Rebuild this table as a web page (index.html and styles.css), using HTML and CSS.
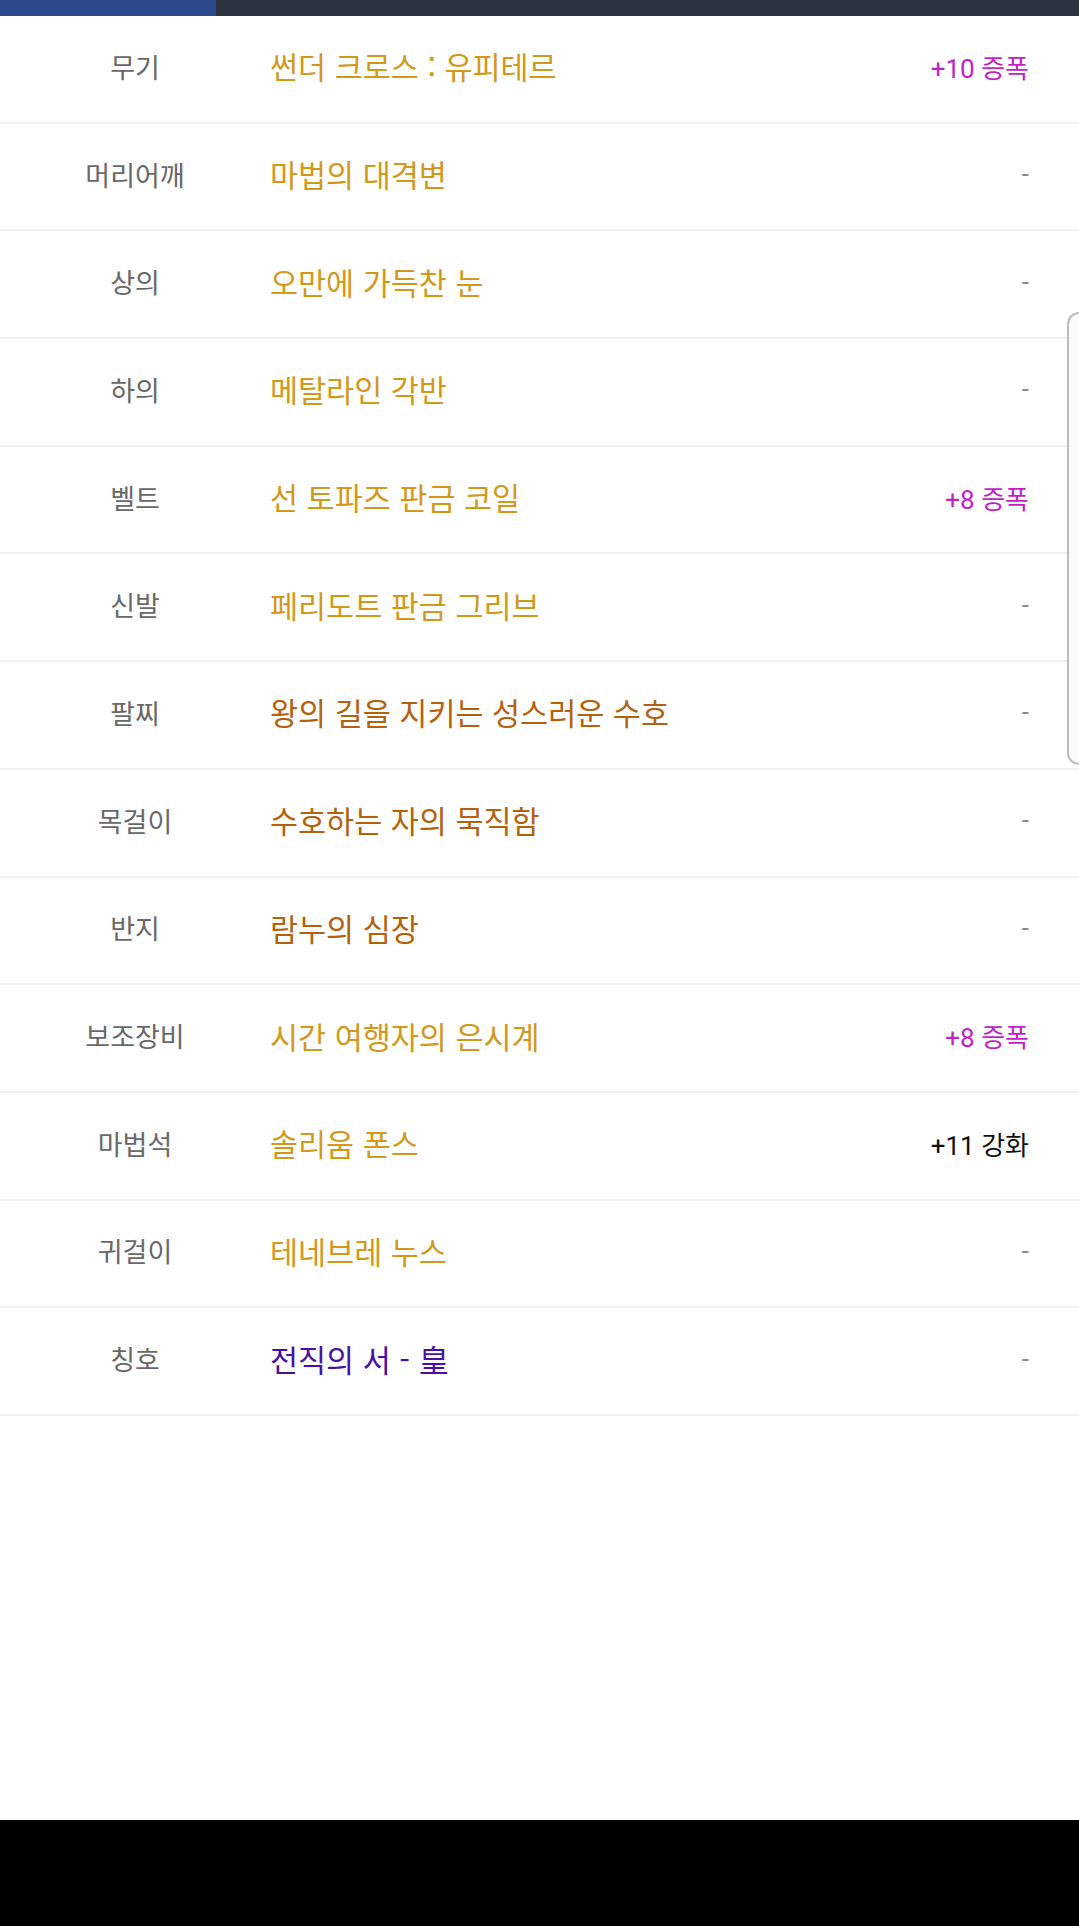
FILE: index.html
```html
<!DOCTYPE html>
<html lang="ko">
<head>
  <meta charset="UTF-8" />
  <meta name="viewport" content="width=device-width, initial-scale=1.0" />
  <title>장비</title>
  <link rel="stylesheet" href="styles.css">
</head>
<body>
  <div class="tabbar">
    <div class="tab-active"></div>
  </div>

  <div class="equip-list">
    <div class="row">
      <span class="slot">무기</span>
      <span class="name gold">썬더 크로스 : 유피테르</span>
      <span class="value amp">+10 증폭</span>
    </div>
    <div class="row">
      <span class="slot">머리어깨</span>
      <span class="name gold">마법의 대격변</span>
      <span class="value none">-</span>
    </div>
    <div class="row">
      <span class="slot">상의</span>
      <span class="name gold">오만에 가득찬 눈</span>
      <span class="value none">-</span>
    </div>
    <div class="row">
      <span class="slot">하의</span>
      <span class="name gold">메탈라인 각반</span>
      <span class="value none">-</span>
    </div>
    <div class="row">
      <span class="slot">벨트</span>
      <span class="name gold">선 토파즈 판금 코일</span>
      <span class="value amp">+8 증폭</span>
    </div>
    <div class="row">
      <span class="slot">신발</span>
      <span class="name gold">페리도트 판금 그리브</span>
      <span class="value none">-</span>
    </div>
    <div class="row">
      <span class="slot">팔찌</span>
      <span class="name epic">왕의 길을 지키는 성스러운 수호</span>
      <span class="value none">-</span>
    </div>
    <div class="row">
      <span class="slot">목걸이</span>
      <span class="name epic">수호하는 자의 묵직함</span>
      <span class="value none">-</span>
    </div>
    <div class="row">
      <span class="slot">반지</span>
      <span class="name epic">람누의 심장</span>
      <span class="value none">-</span>
    </div>
    <div class="row">
      <span class="slot">보조장비</span>
      <span class="name gold">시간 여행자의 은시계</span>
      <span class="value amp">+8 증폭</span>
    </div>
    <div class="row">
      <span class="slot">마법석</span>
      <span class="name gold">솔리움 폰스</span>
      <span class="value">+11 강화</span>
    </div>
    <div class="row">
      <span class="slot">귀걸이</span>
      <span class="name gold">테네브레 누스</span>
      <span class="value none">-</span>
    </div>
    <div class="row">
      <span class="slot">칭호</span>
      <span class="name rare">전직의 서 - 皇</span>
      <span class="value none">-</span>
    </div>
  </div>

  <div class="spacer"></div>
  <div class="navbar"></div>

  <div class="scroll-handle"></div>
</body>
</html>
```

FILE: styles.css
```css
body {
  margin: 0;
  height: 1926px;
  display: flex;
  flex-direction: column;
  background: #fff;
  font-family: "Noto Sans CJK KR", "Noto Sans", sans-serif;
  position: relative;
  overflow: hidden;
}

.tabbar {
  height: 16px;
  background: #2d323f;
  flex-shrink: 0;
}

.tab-active {
  width: 216px;
  height: 100%;
  background: #2e4a8e;
}

.row {
  display: grid;
  grid-template-columns: 270px 1fr auto;
  align-items: center;
  height: 107.7px;
  box-sizing: border-box;
  border-bottom: 2px solid #f1f1f1;
  padding-right: 50px;
  padding-bottom: 5px;
}

.slot {
  text-align: center;
  font-size: 27px;
  color: #686868;
}

.name {
  font-size: 30.5px;
  white-space: nowrap;
}

.gold {
  color: #d3981a;
}

.epic {
  color: #b4610e;
}

.rare {
  color: #4b0fa8;
}

.value {
  font-family: Roboto, "Noto Sans CJK KR", sans-serif;
  font-size: 26px;
  color: #111;
  text-align: right;
}

.value.amp {
  color: #c21fc6;
}

.value.none {
  color: #8a8a8a;
}

.spacer {
  flex: 1;
}

.navbar {
  height: 106px;
  background: #000;
  flex-shrink: 0;
}

.scroll-handle {
  position: absolute;
  right: 0;
  top: 312px;
  width: 10px;
  height: 449px;
  border: 2px solid #bdbdbd;
  border-right: none;
  border-radius: 14px 0 0 14px;
  background: #fbfbfb;
}
```
